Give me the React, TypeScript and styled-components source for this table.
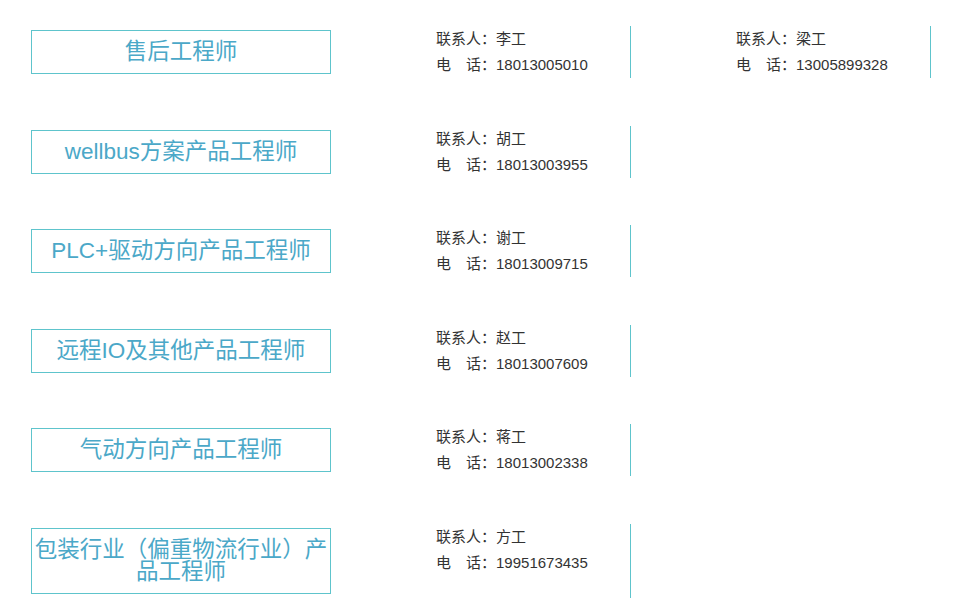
import React from 'react'
import styled, { createGlobalStyle } from 'styled-components'

const GlobalStyle = createGlobalStyle`
  html, body {
    margin: 0;
    padding: 0;
    background: #ffffff;
    font-family: "Liberation Sans", "Noto Sans CJK SC", sans-serif;
  }
`

const Page = styled.div`
  display: flex;
  flex-direction: column;
  gap: 47.6px;
  padding: 26px 0 0 31px;
`

const Row = styled.div`
  display: flex;
  align-items: stretch;
`

const TitleBox = styled.div`
  box-sizing: border-box;
  width: 300px;
  margin: 4px 0;
  padding: 10px 1px;
  border: 1px solid #5ec4cc;
  color: #4ba8c8;
  font-size: 22.5px;
  line-height: 22px;
  text-align: center;
`

const Contact = styled.div`
  box-sizing: border-box;
  width: 300px;
  padding-left: 105px;
  border-right: 1px solid #5ec4cc;
  font-size: 15px;
  line-height: 26px;
  color: #333333;
`

type Person = { name: string; phone: string }

const rows: { title: string; people: Person[] }[] = [
  { title: '售后工程师', people: [{ name: '李工', phone: '18013005010' }, { name: '梁工', phone: '13005899328' }] },
  { title: 'wellbus方案产品工程师', people: [{ name: '胡工', phone: '18013003955' }] },
  { title: 'PLC+驱动方向产品工程师', people: [{ name: '谢工', phone: '18013009715' }] },
  { title: '远程IO及其他产品工程师', people: [{ name: '赵工', phone: '18013007609' }] },
  { title: '气动方向产品工程师', people: [{ name: '蒋工', phone: '18013002338' }] },
  { title: '包装行业（偏重物流行业）产品工程师', people: [{ name: '方工', phone: '19951673435' }] },
]

export default function App() {
  return (
    <>
      <GlobalStyle />
      <Page>
        {rows.map((r) => (
          <Row key={r.title}>
            <TitleBox>{r.title}</TitleBox>
            {r.people.map((p) => (
              <Contact key={p.phone}>
                <div>联系人：{p.name}</div>
                <div>电　话：{p.phone}</div>
              </Contact>
            ))}
          </Row>
        ))}
      </Page>
    </>
  )
}
